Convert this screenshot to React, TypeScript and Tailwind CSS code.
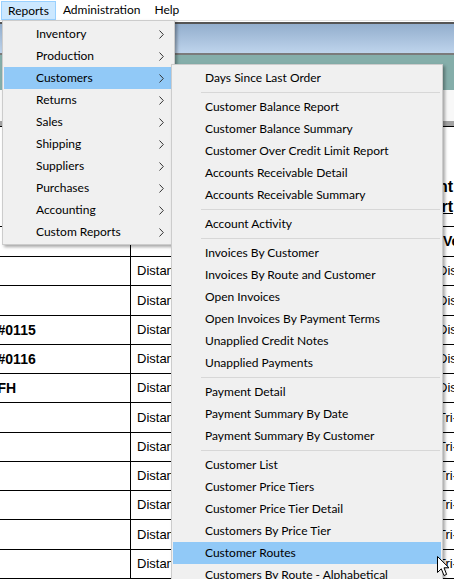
import React from 'react';

const menuFont = { fontFamily: 'Lato, "Noto Sans", sans-serif' };
const tableFont = { fontFamily: '"Liberation Sans", Arial, sans-serif' };

const topItems = [
  'Inventory',
  'Production',
  'Customers',
  'Returns',
  'Sales',
  'Shipping',
  'Suppliers',
  'Purchases',
  'Accounting',
  'Custom Reports',
];

// '-' marks a separator
const customerItems = [
  'Days Since Last Order',
  '-',
  'Customer Balance Report',
  'Customer Balance Summary',
  'Customer Over Credit Limit Report',
  'Accounts Receivable Detail',
  'Accounts Receivable Summary',
  '-',
  'Account Activity',
  '-',
  'Invoices By Customer',
  'Invoices By Route and Customer',
  'Open Invoices',
  'Open Invoices By Payment Terms',
  'Unapplied Credit Notes',
  'Unapplied Payments',
  '-',
  'Payment Detail',
  'Payment Summary By Date',
  'Payment Summary By Customer',
  '-',
  'Customer List',
  'Customer Price Tiers',
  'Customer Price Tier Detail',
  'Customers By Price Tier',
  'Customer Routes',
  'Customers By Route - Alphabetical',
];

const rows = [
  { left: '', right: 'Distance', h: 29 },
  { left: '', right: 'Distance', h: 30 },
  { left: 'Route #0115', right: 'Distance', h: 29 },
  { left: 'Route #0116', right: 'Distance', h: 29 },
  { left: 'Route FH', right: 'Distance', h: 29 },
  { left: '', right: 'Tri-County', h: 30 },
  { left: '', right: 'Tri-County', h: 29 },
  { left: '', right: 'Tri-County', h: 29 },
  { left: '', right: 'Tri-County', h: 29 },
  { left: '', right: 'Tri-County', h: 30 },
  { left: '', right: 'Tri-County', h: 29 },
];

function Chevron() {
  return (
    <svg width="5" height="9" viewBox="0 0 5 9" className="absolute right-[9px] top-[7px]">
      <path d="M0.5 0.5 L4.3 4.5 L0.5 8.5" fill="none" stroke="#333" strokeWidth="1" />
    </svg>
  );
}

function MenuItem({ label, arrow, active }: { label: string; arrow?: boolean; active?: boolean }) {
  return (
    <div
      className={`relative h-[22px] flex items-center pl-[32px] text-[12px] text-black whitespace-nowrap ${
        active ? 'bg-[#91c9f7]' : ''
      }`}
    >
      {label}
      {arrow && <Chevron />}
    </div>
  );
}

function Cursor() {
  return (
    <svg width="13" height="21" viewBox="0 0 13 21" className="absolute left-[437px] top-[556px]">
      <path
        d="M0.5 0.5 L0.5 16.5 L4.3 12.8 L7 19.5 L9.6 18.4 L7 11.8 L12 11.8 Z"
        fill="#fff"
        stroke="#000"
        strokeWidth="1"
        strokeLinejoin="round"
      />
    </svg>
  );
}

export default function App() {
  return (
    <div className="relative w-[454px] h-[579px] overflow-hidden bg-white" style={menuFont}>
      {/* menu bar */}
      <div className="h-[20px] flex items-stretch text-[12px] text-black">
        <div className="mt-[1px] ml-[1px] px-[6px] flex items-center bg-[#cce8ff] border border-[#99d1ff]">Reports</div>
        <div className="px-[7px] flex items-center">Administration</div>
        <div className="px-[7px] flex items-center">Help</div>
      </div>
      <div className="h-[1px] bg-[#e3e3e3]" />
      <div className="h-[1px] bg-white" />
      <div className="h-[2px] bg-[#555]" />
      <div className="h-[29px] bg-gradient-to-b from-[#93aecd] to-[#bed4ec]" />
      <div className="h-[2px] bg-[#7b7b7b]" />
      <div className="h-[35px] bg-[#85aeaa]" />
      <div className="h-[31px] bg-[#f8f8f8]" />
      <div className="h-[5px] bg-[#a2a2a2]" />
      <div className="h-[1px] bg-black" />

      {/* report table */}
      <div className="w-[502px] -ml-[48px] text-black" style={tableFont}>
        <div className="flex h-[99px]">
          <div className="w-[179px] shrink-0 border-r border-black" />
          <div className="flex-1 flex flex-col items-end justify-end pb-[9px] pr-[1px] text-[16px] font-bold leading-[20px]">
            <span>Customer Route Assignment</span>
            <span className="underline">Report</span>
          </div>
        </div>
        <div className="flex h-[30px] border-t border-black">
          <div className="w-[179px] shrink-0 border-r border-black" />
          <div className="w-[310px] shrink-0 border-r border-black" />
          <div className="flex-1 flex items-center pl-[2px] text-[14px] font-bold whitespace-nowrap overflow-hidden">Vendor</div>
        </div>
        {rows.map((r, i) => (
          <div key={i} className="flex border-t border-black" style={{ height: r.h }}>
            <div className="w-[179px] shrink-0 border-r border-black flex items-center pl-[2px] text-[14px] font-bold whitespace-nowrap">
              {r.left}
            </div>
            <div className="w-[310px] shrink-0 border-r border-black flex items-center pl-[6px] text-[13px] whitespace-nowrap overflow-hidden">
              Distance Route
            </div>
            <div className="flex-1 flex items-center -ml-[3px] text-[13px] whitespace-nowrap overflow-hidden">{r.right}</div>
          </div>
        ))}
        <div className="border-t border-black h-[2px]" />
      </div>

      {/* Reports dropdown */}
      <div className="absolute left-[2px] top-[20px] w-[173px] bg-[#f0f0f0] border border-[#cccccc] px-[1px] pt-[2px] pb-[1px] shadow-[2px_2px_3px_rgba(0,0,0,0.35)]">
        {topItems.map((t) => (
          <MenuItem key={t} label={t} arrow active={t === 'Customers'} />
        ))}
      </div>

      {/* Customers submenu */}
      <div className="absolute left-[171px] top-[64px] w-[272px] bg-[#f0f0f0] border border-[#cccccc] px-[1px] pt-[2px] shadow-[2px_2px_3px_rgba(0,0,0,0.35)]">
        {customerItems.map((t, i) =>
          t === '-' ? (
            <div key={i} className="h-[7px] flex items-center">
              <div className="h-[1px] flex-1 ml-[28px] mr-[1px] bg-[#d7d7d7]" />
            </div>
          ) : (
            <MenuItem key={i} label={t} active={t === 'Customer Routes'} />
          )
        )}
      </div>

      <Cursor />
    </div>
  );
}
